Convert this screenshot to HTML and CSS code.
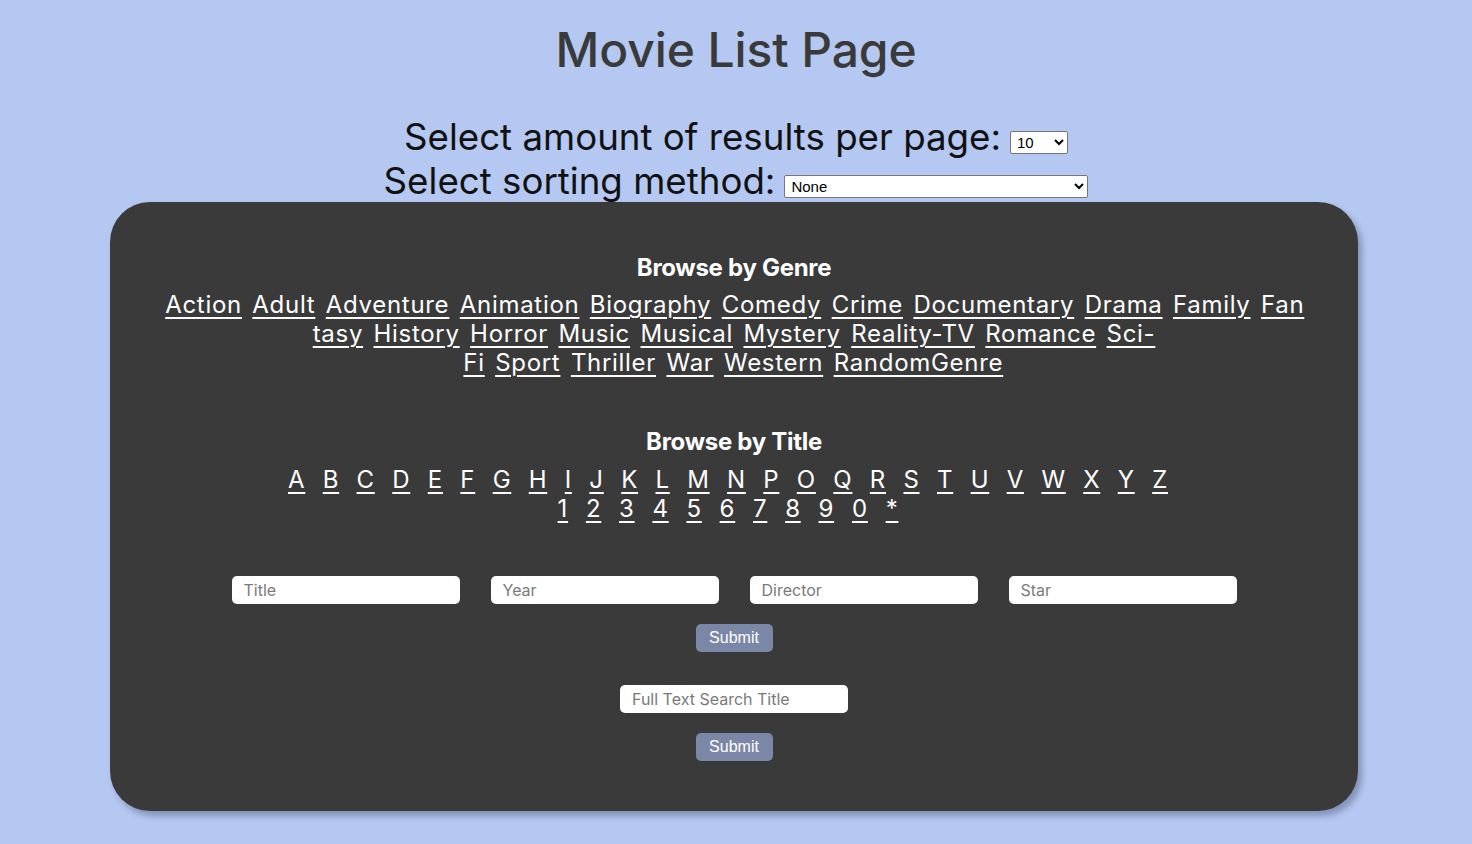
FILE: index.html
```html
<!DOCTYPE html>
<html lang="en">
<head>
<meta charset="utf-8">
<title>Movie List Page</title>
<link rel="stylesheet" href="styles.css">
</head>
<body>
<h1 class="page-title">Movie List Page</h1>
<div class="options">
  <div class="option-row">
    <label for="per-page">Select amount of results per page:</label>
    <select id="per-page" class="select-small">
      <option>10</option><option>25</option><option>50</option><option>100</option>
    </select>
  </div>
  <div class="option-row">
    <label for="sort">Select sorting method:</label>
    <select id="sort" class="select-wide">
      <option>None</option>
      <option>Title ascending, rating descending</option>
    </select>
  </div>
</div>
<main class="card">
  <section class="browse">
    <h3 class="browse-heading">Browse by Genre</h3>
    <div class="genre-list">
      <a href="#">Action</a> <a href="#">Adult</a> <a href="#">Adventure</a> <a href="#">Animation</a> <a href="#">Biography</a> <a href="#">Comedy</a> <a href="#">Crime</a> <a href="#">Documentary</a> <a href="#">Drama</a> <a href="#">Family</a> <a href="#">Fantasy</a> <a href="#">History</a> <a href="#">Horror</a> <a href="#">Music</a> <a href="#">Musical</a> <a href="#">Mystery</a> <a href="#">Reality-TV</a> <a href="#">Romance</a> <a href="#">Sci-<br>Fi</a> <a href="#">Sport</a> <a href="#">Thriller</a> <a href="#">War</a> <a href="#">Western</a> <a href="#">RandomGenre</a>
    </div>
  </section>
  <section class="browse browse-title">
    <h3 class="browse-heading">Browse by Title</h3>
    <div class="title-list">
      <a href="#">A</a> <a href="#">B</a> <a href="#">C</a> <a href="#">D</a> <a href="#">E</a> <a href="#">F</a> <a href="#">G</a> <a href="#">H</a> <a href="#">I</a> <a href="#">J</a> <a href="#">K</a> <a href="#">L</a> <a href="#">M</a> <a href="#">N</a> <a href="#">P</a> <a href="#">O</a> <a href="#">Q</a> <a href="#">R</a> <a href="#">S</a> <a href="#">T</a> <a href="#">U</a> <a href="#">V</a> <a href="#">W</a> <a href="#">X</a> <a href="#">Y</a> <a href="#">Z</a>
    </div>
    <div class="title-list">
      <a href="#">1</a> <a href="#">2</a> <a href="#">3</a> <a href="#">4</a> <a href="#">5</a> <a href="#">6</a> <a href="#">7</a> <a href="#">8</a> <a href="#">9</a> <a href="#">0</a> <a href="#">*</a>
    </div>
  </section>
  <form class="search-form">
    <div class="field-row">
      <input class="field" type="text" placeholder="Title">
      <input class="field" type="text" placeholder="Year">
      <input class="field" type="text" placeholder="Director">
      <input class="field" type="text" placeholder="Star">
    </div>
    <button class="submit" type="button">Submit</button>
  </form>
  <form class="search-form fulltext-form">
    <div class="field-row">
      <input class="field" type="text" placeholder="Full Text Search Title">
    </div>
    <button class="submit" type="button">Submit</button>
  </form>
</main>
</body>
</html>
```
FILE: styles.css
```css
html, body {
  margin: 0;
  padding: 0;
}
body {
  background: #b4c8f1;
  font-family: Inter, "Noto Sans", sans-serif;
  min-height: 844px;
}
.page-title {
  margin: 22px 0 0;
  height: 56px;
  line-height: 56px;
  text-align: center;
  font-size: 48px;
  font-weight: 500;
  color: #3a3a3a;
  letter-spacing: -0.1px;
}
.options {
  margin-top: 37px;
}
.option-row {
  display: flex;
  justify-content: center;
  align-items: center;
  height: 44px;
  gap: 9px;
}
.option-row label {
  font-size: 36.7px;
  color: #111;
  line-height: 44px;
  letter-spacing: 0;
}
.option-row select {
  font-family: Arial, "Liberation Sans", sans-serif;
  font-size: 15px;
  height: 23px;
  margin-top: 10px;
  padding: 0 2px;
  background: #fff;
  color: #000;
  border: 1px solid #767676;
  border-radius: 2px;
}
.select-small { width: 58px; }
.select-wide { width: 304px; }

.card {
  box-sizing: border-box;
  width: 1248px;
  margin: -1px 0 0 110px;
  background: #3a3a3a;
  border-radius: 40px;
  box-shadow: 4px 5px 6px rgba(40, 50, 80, 0.35);
  padding: 51px 50px 50px;
  color: #fff;
  text-align: center;
}
.browse-heading {
  margin: 0;
  font-size: 24px;
  line-height: 30px;
  font-weight: 700;
  letter-spacing: -0.3px;
}
.genre-list {
  margin: 7px auto 0;
  width: 1148px;
  word-break: break-all;
  font-size: 24px;
  line-height: 29px;
  letter-spacing: 0.7px;
}
.genre-list a, .title-list a {
  color: #fff;
  text-decoration: underline;
  text-underline-offset: 4px;
  text-decoration-thickness: 2px;
}
.genre-list a {
  margin: 0 1.5px;
}
.browse-title {
  margin-top: 50px;
}
.title-list {
  font-size: 24px;
  line-height: 29px;
  letter-spacing: 0.7px;
  padding-right: 12px;
}
.browse-title .browse-heading + .title-list {
  margin-top: 8px;
}
.title-list a {
  margin: 0 5px;
}
.title-list + .title-list a {
  margin: 0 5.2px;
}
.search-form {
  margin-top: 53px;
  display: flex;
  flex-direction: column;
  align-items: center;
}
.fulltext-form {
  margin-top: 33px;
}
.field-row {
  display: flex;
  justify-content: center;
  gap: 31px;
}
.field {
  box-sizing: border-box;
  width: 228px;
  height: 28px;
  border: none;
  border-radius: 5px;
  background: #fff;
  padding: 0 12px;
  font-family: Inter, "Noto Sans", sans-serif;
  font-size: 16px;
  color: #333;
  outline: none;
}
.field::placeholder {
  color: #7a7a7a;
}
.submit {
  margin-top: 20px;
  width: 77px;
  height: 28px;
  border: none;
  border-radius: 5px;
  background: #7b87a6;
  color: #fff;
  font-family: Arial, "Liberation Sans", sans-serif;
  font-size: 16px;
  padding: 0;
}
```
